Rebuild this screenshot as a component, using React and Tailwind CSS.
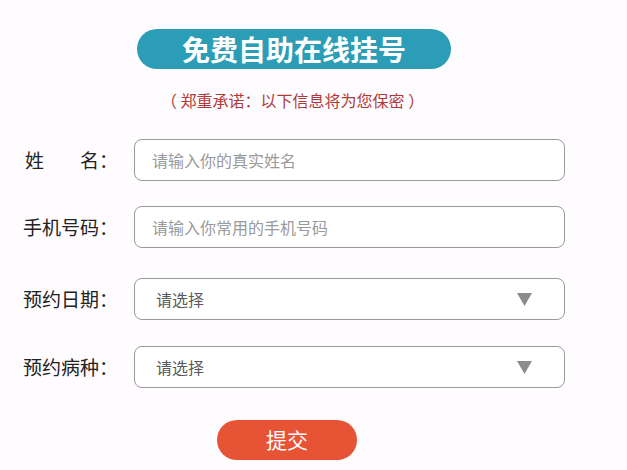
import React from 'react';

const FONT = { fontFamily: '"Microsoft YaHei", "Noto Sans CJK SC", "Noto Sans", sans-serif' };

const Row = ({ label, children, className = '' }) => (
  <div className={`flex items-center ${className}`}>
    <div className="w-[134px] pl-[23px] text-[19px] text-[#222]">{label}</div>
    {children}
  </div>
);

const TextBox = ({ placeholder }) => (
  <input
    placeholder={placeholder}
    className="w-[431px] h-[42px] rounded-lg border border-[#9a9a9a] bg-white px-[17px] text-[16px] placeholder:text-[#9a9a9a] outline-none"
    style={FONT}
  />
);

const SelectBox = () => (
  <div className="w-[431px] h-[42px] rounded-lg border border-[#9a9a9a] bg-white flex items-center justify-between pl-[21px] pr-[32px]">
    <span className="text-[16px] text-[#5a5a5a]">请选择</span>
    <svg width="15" height="13" viewBox="0 0 15 13">
      <polygon points="0,0 15,0 7.5,13" fill="#8c8c8c" />
    </svg>
  </div>
);

export default function App() {
  return (
    <div className="w-[627px] h-[470px] bg-[#fefcfe] overflow-hidden" style={FONT}>
      <div className="pt-[29px] pl-[137px]">
        <div className="w-[314px] h-10 rounded-full bg-[#2b9db6] flex items-center justify-center text-white text-[28px] font-bold">
          免费自助在线挂号
        </div>
      </div>
      <p className="mt-[19px] pl-[161px] text-[16px] text-[#b03a3a]">（ 郑重承诺：以下信息将为您保密 ）</p>

      <Row className="mt-[27px]" label={<span className="flex pl-[2px]"><span className="w-[55px]">姓</span>名：</span>}>
        <TextBox placeholder="请输入你的真实姓名" />
      </Row>
      <Row className="mt-[25px]" label="手机号码：">
        <TextBox placeholder="请输入你常用的手机号码" />
      </Row>
      <Row className="mt-[30px]" label="预约日期：">
        <SelectBox />
      </Row>
      <Row className="mt-[26px]" label="预约病种：">
        <SelectBox />
      </Row>

      <div className="mt-[32px] pl-[217px]">
        <button className="w-[140px] h-10 rounded-full bg-[#e65335] text-white text-[21px]">提交</button>
      </div>
    </div>
  );
}
